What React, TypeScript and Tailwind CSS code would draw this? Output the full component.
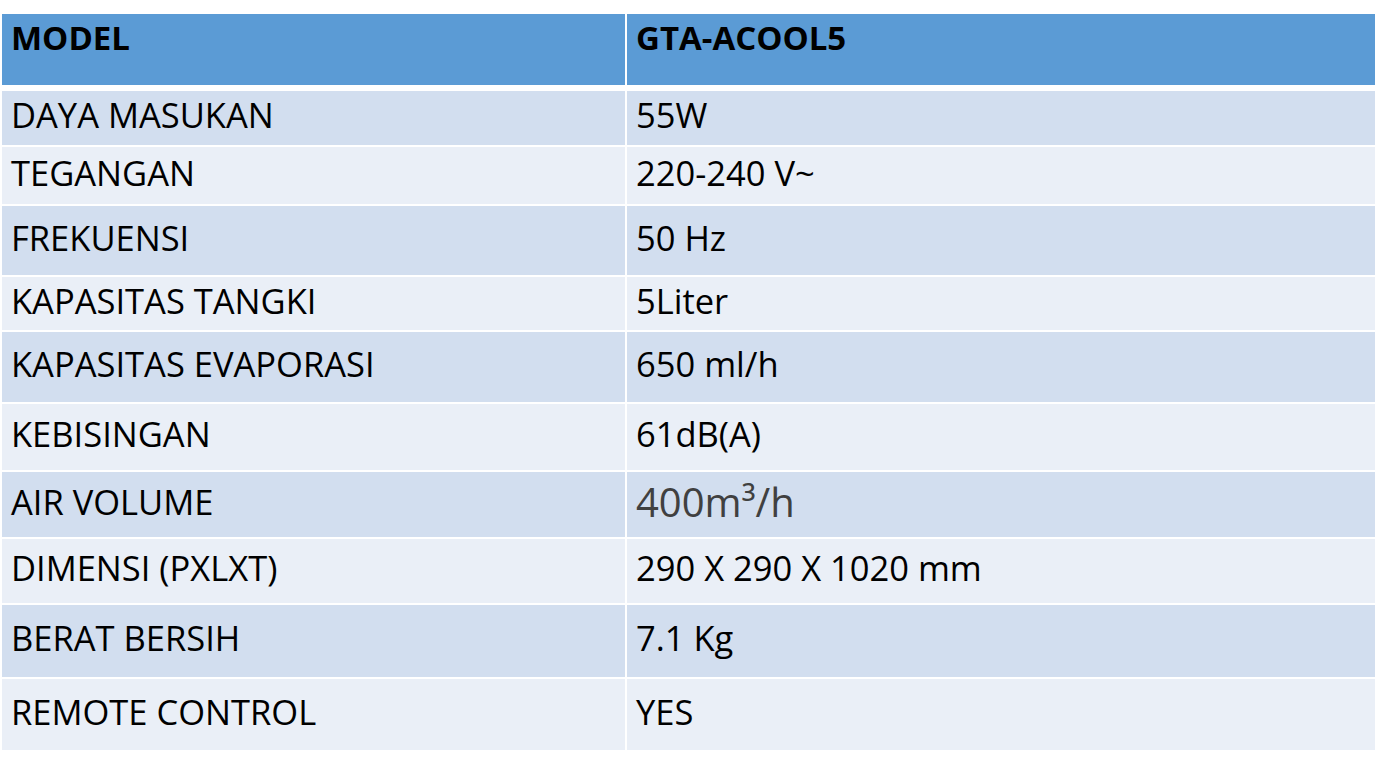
const rows: { label: string; value: string; h: string }[] = [
  { label: "DAYA MASUKAN", value: "55W", h: "h-[54px]" },
  { label: "TEGANGAN", value: "220-240 V~", h: "h-[57px]" },
  { label: "FREKUENSI", value: "50 Hz", h: "h-[69px]" },
  { label: "KAPASITAS TANGKI", value: "5Liter", h: "h-[53px]" },
  { label: "KAPASITAS EVAPORASI", value: "650 ml/h", h: "h-[70px]" },
  { label: "KEBISINGAN", value: "61dB(A)", h: "h-[66px]" },
  { label: "AIR VOLUME", value: "400m³/h", h: "h-[65px]" },
  { label: "DIMENSI (PXLXT)", value: "290 X 290 X 1020 mm", h: "h-[64px]" },
  { label: "BERAT BERSIH", value: "7.1 Kg", h: "h-[72px]" },
  { label: "REMOTE CONTROL", value: "YES", h: "h-[71px]" },
];

export default function App() {
  return (
    <div className="w-[1381px] h-[760px] bg-white pt-[14px] pl-[2px] font-['Open_Sans',sans-serif] text-black overflow-hidden">
      <div className="w-[1373px] flex flex-col gap-[2px]">
        {/* header */}
        <div className="grid grid-cols-[623px_748px] gap-x-[2px] h-[71px] mb-[4px]">
          <div className="bg-[#5B9BD5] pl-[9px] pt-[2px] text-[33px] font-bold leading-[44px]">
            MODEL
          </div>
          <div className="bg-[#5B9BD5] pl-[9px] pt-[2px] text-[33px] font-bold leading-[44px]">
            GTA-ACOOL5
          </div>
        </div>

        {rows.map((r, i) => {
          const bg = i % 2 === 0 ? "bg-[#D2DEEF]" : "bg-[#EAEFF7]";
          const special = r.label === "AIR VOLUME";
          return (
            <div
              key={r.label}
              className={`grid grid-cols-[623px_748px] gap-x-[2px] ${r.h}`}
            >
              <div className={`${bg} flex items-center pl-[9px] pb-[5px] text-[34.5px] leading-none`}>
                {r.label}
              </div>
              <div
                className={`${bg} flex items-center pl-[9px] pb-[5px] leading-none ${
                  special ? "text-[40px] text-[#404040]" : "text-[34.5px]"
                }`}
              >
                {r.value}
              </div>
            </div>
          );
        })}
      </div>
    </div>
  );
}
